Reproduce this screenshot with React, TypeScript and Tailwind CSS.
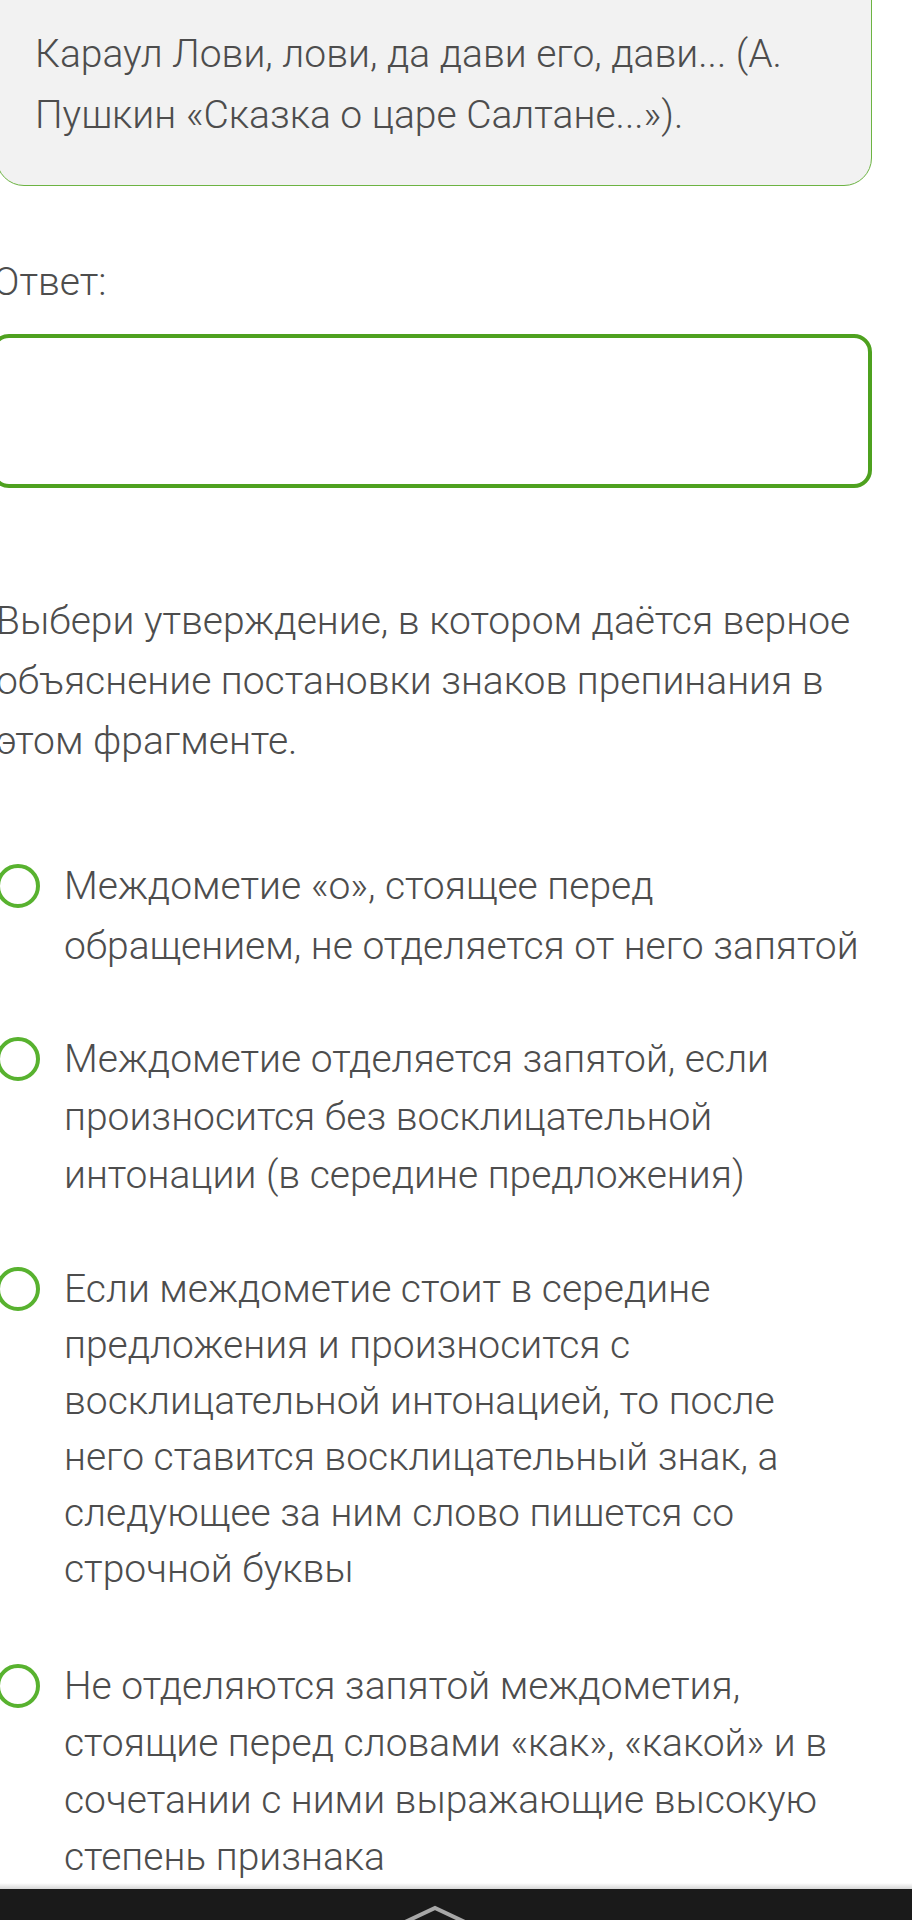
import React from 'react';

const options = [
  {
    lines: ['Междометие «о», стоящее перед', 'обращением, не отделяется от него запятой'],
    lh: 'leading-[60px]',
    mt: 'mt-[85px]',
  },
  {
    lines: [
      'Междометие отделяется запятой, если',
      'произносится без восклицательной',
      'интонации (в середине предложения)',
    ],
    lh: 'leading-[58px]',
    mt: 'mt-[54px]',
  },
  {
    lines: [
      'Если междометие стоит в середине',
      'предложения и произносится с',
      'восклицательной интонацией, то после',
      'него ставится восклицательный знак, а',
      'следующее за ним слово пишется со',
      'строчной буквы',
    ],
    lh: 'leading-[56px]',
    mt: 'mt-[57px]',
  },
  {
    lines: [
      'Не отделяются запятой междометия,',
      'стоящие перед словами «как», «какой» и в',
      'сочетании с ними выражающие высокую',
      'степень признака',
    ],
    lh: 'leading-[57px]',
    mt: 'mt-[61px]',
  },
];

function Radio({ lh }: { lh: string }) {
  const offset = lh === 'leading-[60px]' ? 'mt-[8px]' : lh === 'leading-[58px]' ? 'mt-[7px]' : 'mt-[6px]';
  return (
    <div className={`shrink-0 w-[44px] h-[44px] rounded-full border-[4px] border-[#58b22f] ${offset}`} />
  );
}

export default function App() {
  return (
    <div className="w-[912px] h-[1920px] bg-white overflow-hidden flex flex-col font-['Roboto',sans-serif] font-light text-[39px] text-[#4d4d4d]">
      <div className="flex-1 overflow-hidden">
        <div className="ml-[-4px] w-[876px] flex flex-col">
          {/* quote card */}
          <div className="mt-[-30px] pt-[53px] pb-[39px] pl-[38px] pr-[20px] bg-[#f2f2f2] border-[1.5px] border-[#6cb342] rounded-[28px] leading-[61px]">
            <p>Караул Лови, лови, да дави его, дави... (А.</p>
            <p>Пушкин «Сказка о царе Салтане...»).</p>
          </div>

          <p className="mt-[66px] ml-[-3px] leading-[60px]">Ответ:</p>

          <div className="mt-[22px] ml-[-5px] h-[154px] border-[4px] border-[#4ea11f] rounded-[18px] bg-white" />

          <div className="mt-[103px] leading-[60px]">
            <p>Выбери утверждение, в котором даётся верное</p>
            <p>объяснение постановки знаков препинания в</p>
            <p>этом фрагменте.</p>
          </div>

          {options.map((o, i) => (
            <div key={i} className={`flex items-start gap-[24px] ${o.mt}`}>
              <Radio lh={o.lh} />
              <div className={o.lh}>
                {o.lines.map((l, j) => (
                  <p key={j} className="whitespace-nowrap">
                    {l}
                  </p>
                ))}
              </div>
            </div>
          ))}
        </div>
      </div>

      {/* system navigation bar */}
      <div className="h-[6px] bg-gradient-to-b from-white to-[#d6d6d6]" />
      <div className="h-[31px] bg-[#1a1a1a] flex justify-center overflow-hidden">
        <svg width="80" height="31" viewBox="0 0 80 31" className="ml-[-42px]">
          <polyline points="8,34 40,19 72,34" fill="none" stroke="#a8a8a8" strokeWidth="4" strokeLinejoin="miter" />
        </svg>
      </div>
    </div>
  );
}
